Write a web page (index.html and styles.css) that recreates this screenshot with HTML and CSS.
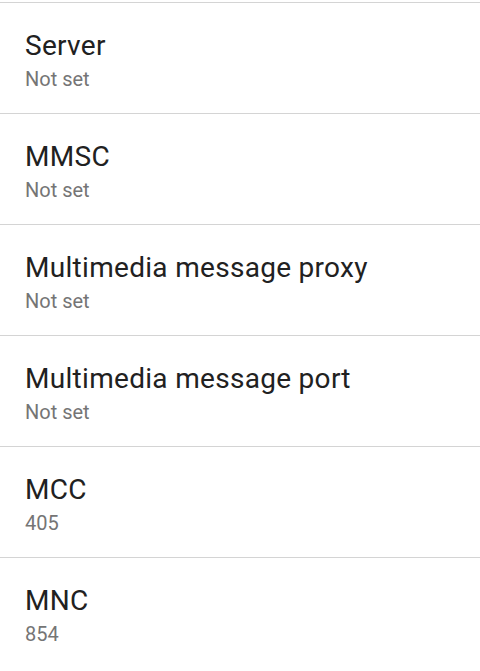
FILE: index.html
```html
<!DOCTYPE html>
<html lang="en">
<head>
    <meta charset="UTF-8">
    <meta name="viewport" content="width=device-width, initial-scale=1.0">
    <title>APN settings</title>
    <link rel="stylesheet" href="styles.css">
</head>
<body>
    <ul class="pref-list">
        <li class="pref">
            <div class="pref-title">Server</div>
            <div class="pref-summary">Not set</div>
        </li>
        <li class="pref">
            <div class="pref-title">MMSC</div>
            <div class="pref-summary">Not set</div>
        </li>
        <li class="pref">
            <div class="pref-title">Multimedia message proxy</div>
            <div class="pref-summary">Not set</div>
        </li>
        <li class="pref">
            <div class="pref-title">Multimedia message port</div>
            <div class="pref-summary">Not set</div>
        </li>
        <li class="pref">
            <div class="pref-title">MCC</div>
            <div class="pref-summary">405</div>
        </li>
        <li class="pref">
            <div class="pref-title">MNC</div>
            <div class="pref-summary">854</div>
        </li>
    </ul>
</body>
</html>
```

FILE: styles.css
```css
body {
    font-family: Roboto, 'Noto Sans', sans-serif;
    background: #fff;
    margin: 0;
    padding: 0;
}
.pref-list {
    list-style: none;
    margin: 0;
    padding: 2px 0 0 0;
}
.pref {
    border-top: 1px solid #d4d4d4;
    height: 111px;
    padding: 26px 24px 0 25px;
    box-sizing: border-box;
}
.pref-title {
    color: #212121;
    font-size: 28px;
    line-height: 34px;
    letter-spacing: 0.3px;
}
.pref-summary {
    color: #757575;
    font-size: 20px;
    line-height: 26px;
    margin-top: 3px;
}
```
